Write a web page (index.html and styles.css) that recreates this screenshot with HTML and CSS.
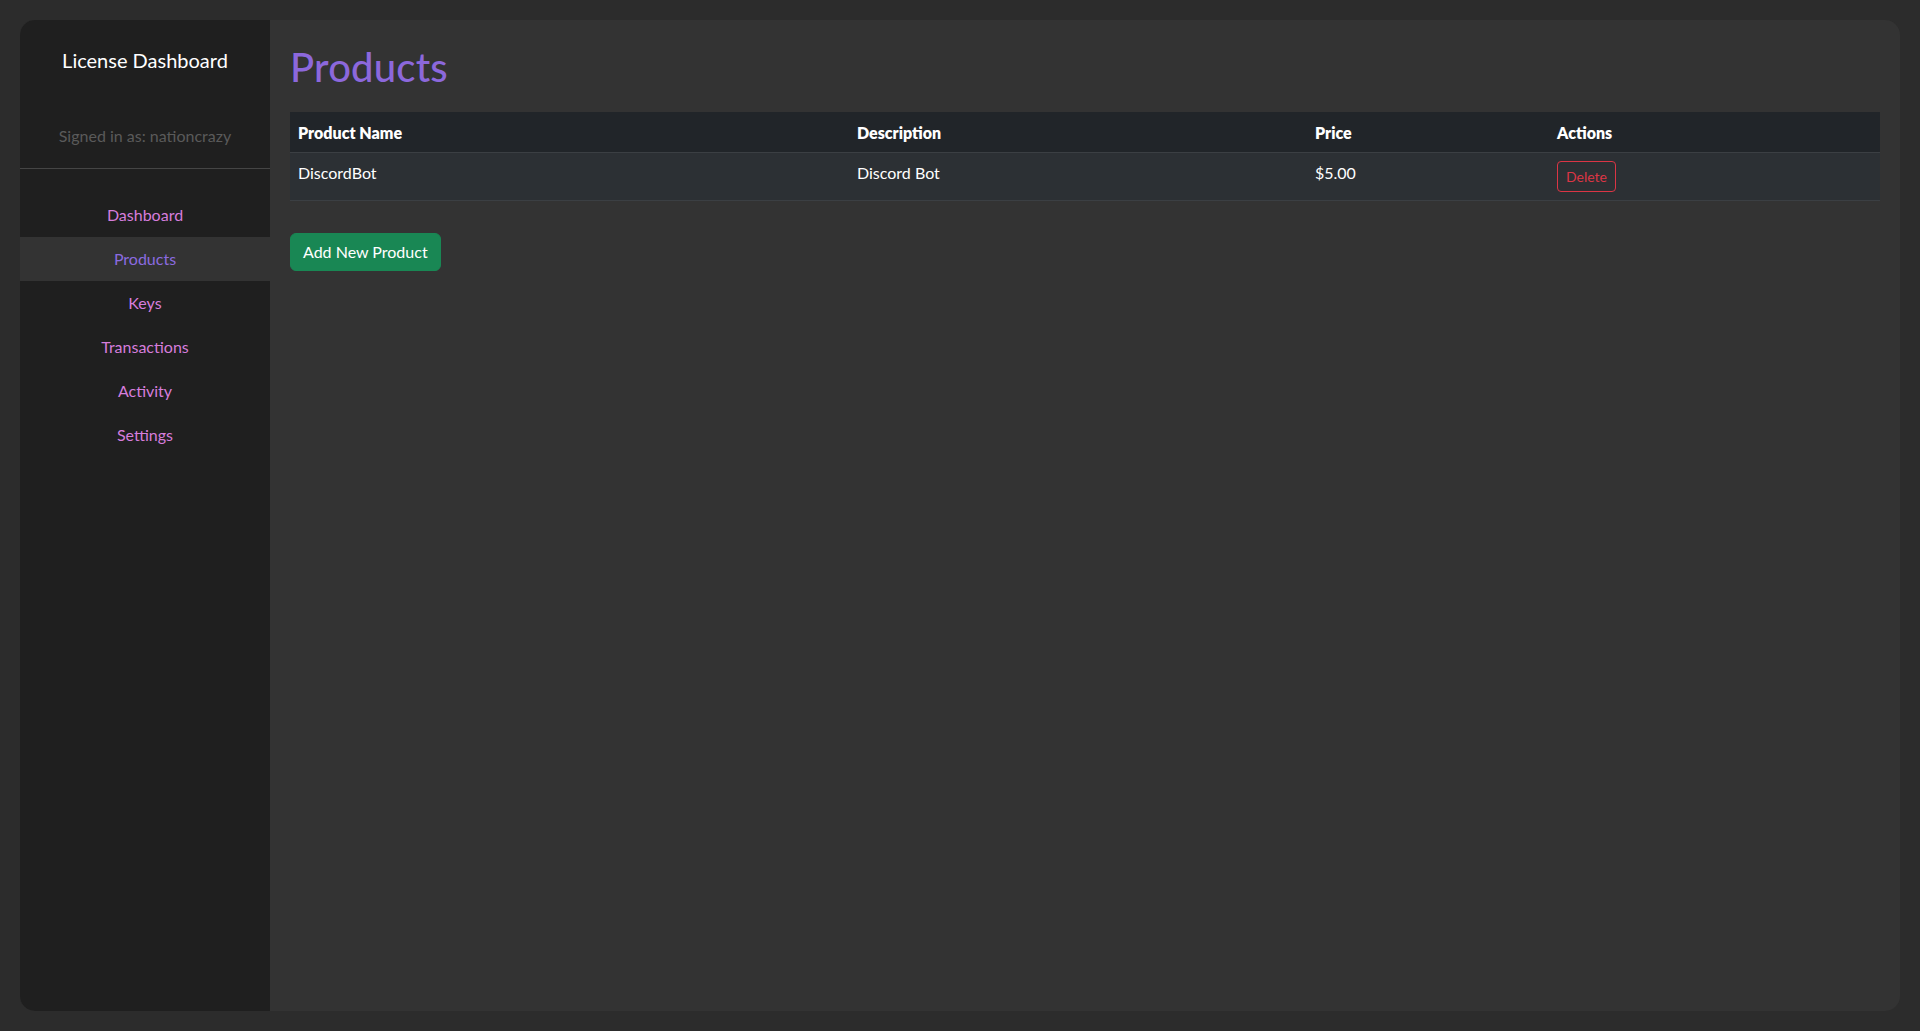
FILE: index.html
```html
<!DOCTYPE html>
<html lang="en">
<head>
<meta charset="utf-8">
<title>Products - License Dashboard</title>
<link rel="stylesheet" href="styles.css">
</head>
<body>
<div class="app">
  <aside class="sidebar">
    <div class="sidebar-header">
      <div class="brand">License Dashboard</div>
      <div class="signed-in">Signed in as: nationcrazy</div>
    </div>
    <nav class="nav">
      <a class="nav-link" href="#">Dashboard</a>
      <a class="nav-link active" href="#">Products</a>
      <a class="nav-link" href="#">Keys</a>
      <a class="nav-link" href="#">Transactions</a>
      <a class="nav-link" href="#">Activity</a>
      <a class="nav-link" href="#">Settings</a>
    </nav>
  </aside>
  <main class="main">
    <h1 class="page-title">Products</h1>
    <table class="table">
      <colgroup>
        <col class="col-name">
        <col class="col-desc">
        <col class="col-price">
        <col class="col-actions">
      </colgroup>
      <thead>
        <tr>
          <th>Product Name</th>
          <th>Description</th>
          <th>Price</th>
          <th>Actions</th>
        </tr>
      </thead>
      <tbody>
        <tr>
          <td>DiscordBot</td>
          <td>Discord Bot</td>
          <td>$5.00</td>
          <td><button class="btn-delete" type="button">Delete</button></td>
        </tr>
      </tbody>
    </table>
    <button class="btn-add" type="button">Add New Product</button>
  </main>
</div>
</body>
</html>
```

FILE: styles.css
```css
* {
  box-sizing: border-box;
}

html, body {
  margin: 0;
  height: 100%;
}

body {
  background: #2c2c2c;
  padding: 20px;
  font-family: Lato, "Open Sans", "Liberation Sans", sans-serif;
  color: #fff;
}

.app {
  display: flex;
  height: 100%;
  background: #333333;
  border-radius: 15px;
  overflow: hidden;
}

.sidebar {
  width: 250px;
  flex: 0 0 250px;
  background: #1f1f1f;
  display: flex;
  flex-direction: column;
}

.sidebar-header {
  text-align: center;
  padding: 25px 0 20px;
  border-bottom: 1px solid #454545;
}

.brand {
  font-size: 20px;
  line-height: 30px;
  color: #fff;
  margin-bottom: 49px;
}

.signed-in {
  font-size: 16px;
  line-height: 24px;
  color: #5a5a5a;
}

.nav {
  display: flex;
  flex-direction: column;
  margin-top: 24px;
}

.nav-link {
  display: block;
  height: 44px;
  line-height: 44px;
  text-align: center;
  font-size: 16px;
  color: #d67ddc;
  text-decoration: none;
}

.nav-link.active {
  background: #333333;
  color: #8b6be0;
}

.main {
  flex: 1;
  padding: 20px;
}

.page-title {
  margin: 3px 0 21px;
  font-size: 40px;
  line-height: 48px;
  font-weight: 500;
  color: #8c68dc;
  letter-spacing: 0.2px;
}

.table {
  width: 100%;
  border-collapse: collapse;
  table-layout: fixed;
  font-size: 16px;
  line-height: 24px;
}

.col-name { width: 559px; }
.col-desc { width: 458px; }
.col-price { width: 242px; }
.col-actions { width: 331px; }

.table th {
  background: #212529;
  text-align: left;
  font-weight: 800;
  padding: 9px 8px 7px;
  border-bottom: 1px solid #3b3f43;
  vertical-align: top;
}

.table td {
  background: #2c3034;
  padding: 8px;
  border-bottom: 1px solid #3b3f43;
  vertical-align: top;
}

.btn-delete {
  display: inline-block;
  font-family: inherit;
  font-size: 14px;
  line-height: 21px;
  padding: 4px 8px;
  color: #dc3545;
  background: transparent;
  border: 1px solid #dc3545;
  border-radius: 4px;
}

.btn-add {
  display: inline-block;
  margin-top: 32px;
  font-family: inherit;
  font-size: 16px;
  line-height: 24px;
  padding: 6px 12px;
  color: #fff;
  background: #198754;
  border: 1px solid #198754;
  border-radius: 6px;
}
```
